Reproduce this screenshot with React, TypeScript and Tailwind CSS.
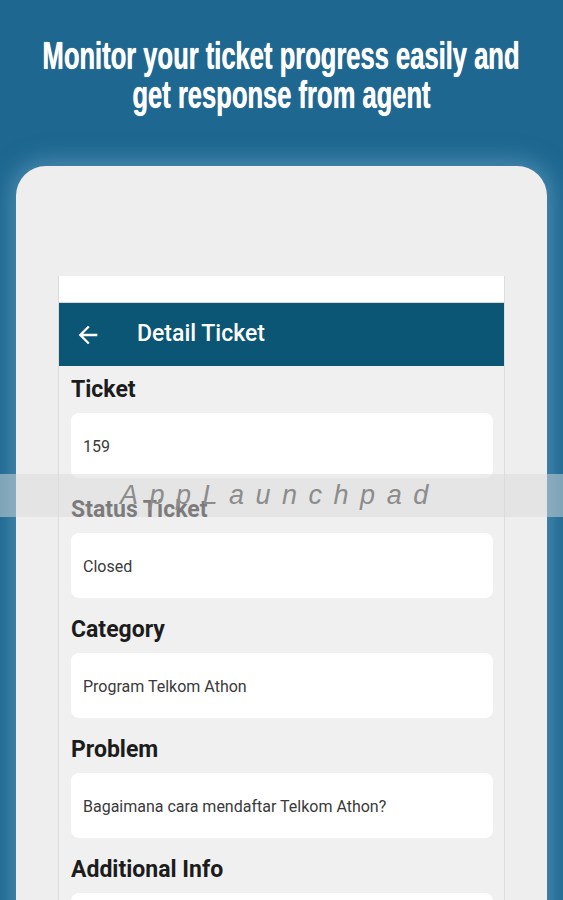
const fields = [
  { label: "Ticket", value: "159" },
  { label: "Status Ticket", value: "Closed" },
  { label: "Category", value: "Program Telkom Athon" },
  { label: "Problem", value: "Bagaimana cara mendaftar Telkom Athon?" },
  { label: "Additional Info", value: "" },
];

function BackArrow() {
  return (
    <svg viewBox="0 0 24 24" className="ml-[15px] h-[28px] w-[28px]" fill="currentColor">
      <path d="M20 11H7.83l5.59-5.59L12 4l-8 8 8 8 1.41-1.41L7.83 13H20v-2z" />
    </svg>
  );
}

export default function App() {
  return (
    <div className="relative h-[900px] w-[563px] overflow-hidden bg-[#1d6790] font-['Roboto',sans-serif]">
      {/* headline */}
      <h1 className="flex flex-col items-center pt-[36px] font-['Liberation_Sans',sans-serif] text-[39px] font-bold leading-[39px] text-white [text-shadow:0_0_1px_#fff]">
        <span className="scale-x-[0.655] whitespace-nowrap">Monitor your ticket progress easily and</span>
        <span className="scale-x-[0.655] whitespace-nowrap">get response from agent</span>
      </h1>

      {/* phone frame */}
      <div className="mx-4 mt-[52px] h-[800px] rounded-t-[30px] bg-[#eeeeee] px-[42px] pt-[110px] shadow-[0_0_22px_6px_rgba(110,165,200,0.55)]">
        <div className="h-full border-x border-[#dcdcdc] bg-[#f0f0f0]">
          <div className="h-[27px] border-b border-[#d8d8d8] bg-white" />
          <div className="flex h-[63px] items-center bg-[#0b5575] text-white">
            <BackArrow />
            <span className="ml-[35px] text-[23px] font-medium">Detail Ticket</span>
          </div>
          <div className="pl-3 pr-[11px] pt-[10px]">
            {fields.map((f) => (
              <div key={f.label} className="mb-[18px]">
                <div className="h-[28px] text-[23px] font-bold leading-[28px] text-[#1c1c1c]">{f.label}</div>
                <div className="mt-[9px] flex h-[65px] items-center rounded-[8px] bg-white px-3 pt-[3px] text-[16px] text-[#3a3a3a]">
                  {f.value}
                </div>
              </div>
            ))}
          </div>
        </div>
      </div>

      {/* watermark band */}
      <div className="absolute left-0 top-[474px] flex h-[43px] w-full items-center bg-[rgba(218,218,218,0.5)]">
        <span className="ml-[120px] font-['Liberation_Sans',sans-serif] text-[27px] font-light italic tracking-[11.5px] text-[#8c8c8c]">
          AppLaunchpad
        </span>
      </div>
    </div>
  );
}
